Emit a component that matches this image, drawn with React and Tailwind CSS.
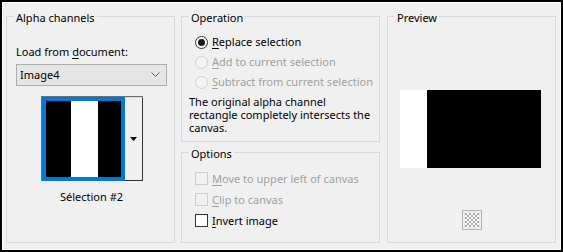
import React from 'react';

const Mn = ({ children }) => <span className="underline underline-offset-[2px]">{children}</span>;

const Group = ({ title, className, children }) => (
  <fieldset className={`min-w-0 border border-[#d9d9d9] ${className}`}>
    <legend className="ml-[7px] px-[2px] pt-[4px] leading-[16px] text-black">{title}</legend>
    {children}
  </fieldset>
);

const Radio = ({ checked, disabled, mn, rest }) => (
  <div className="flex h-[20px] items-center whitespace-nowrap">
    <span
      className={`flex h-[13px] w-[13px] items-center justify-center rounded-full border ${
        disabled ? 'border-[#cfcfcf] bg-[#f4f4f4]' : 'border-[#333333] bg-white'
      }`}
    >
      {checked && <span className="h-[7px] w-[7px] rounded-full bg-[#1a1a1a]" />}
    </span>
    <span className={`ml-[4px] leading-[16px] ${disabled ? 'text-[#a0a0a0]' : 'text-black'}`}>
      <Mn>{mn}</Mn>
      {rest}
    </span>
  </div>
);

const Check = ({ disabled, mn, rest }) => (
  <div className="flex h-[21px] items-center whitespace-nowrap">
    <span
      className={`h-[13px] w-[13px] border ${
        disabled ? 'border-[#cccccc] bg-[#f0f0f0]' : 'border-[#333333] bg-white'
      }`}
    />
    <span className={`ml-[4px] leading-[16px] ${disabled ? 'text-[#a0a0a0]' : 'text-black'}`}>
      <Mn>{mn}</Mn>
      {rest}
    </span>
  </div>
);

export default function App() {
  return (
    <div className="h-[252px] w-[563px] border-2 border-black bg-[#f0f0f0] font-['Noto_Sans',sans-serif] text-[11px] text-black">
      <div className="flex h-full w-full border border-white pl-[3px] pt-[3px]">
        {/* Alpha channels */}
        <Group title="Alpha channels" className="h-[237px] w-[169px] shrink-0">
          <div className="flex flex-col pl-[9px] pr-[7px]">
            <div className="mt-[18px] leading-[16px]">
              Load from <Mn>d</Mn>ocument:
            </div>
            <div className="mt-[4px] flex h-[22px] w-full items-center justify-between border border-[#adadad] bg-[#e5e5e5] pl-[3px] pr-[6px]">
              <span className="leading-[14px]">Image4</span>
              <svg width="9" height="6" viewBox="0 0 9 6">
                <path d="M0.5 0.5 L4.5 4.5 L8.5 0.5" fill="none" stroke="#606060" strokeWidth="1" />
              </svg>
            </div>
            <div className="mt-[10px] flex self-center">
              <div className="flex h-[85px] border-l border-t border-[#6e6e6e]">
                <div className="flex h-[84px] w-[83px] border-4 border-[#0078d7]">
                  <div className="h-full w-[25px] bg-black" />
                  <div className="h-full w-[27px] bg-white" />
                  <div className="h-full flex-1 bg-black" />
                </div>
                <div className="flex h-[84px] w-[18px] items-center justify-center border-b border-r border-t border-b-[#333333] border-r-[#333333] border-t-[#dcdcdc] bg-[#f0f0f0]">
                  <svg width="7" height="4" viewBox="0 0 7 4">
                    <path d="M0 0 H7 L3.5 4 Z" fill="#000" />
                  </svg>
                </div>
              </div>
            </div>
            <div className="mt-[8px] self-center leading-[16px]">Sélection #2</div>
          </div>
        </Group>

        {/* Operation + Options */}
        <div className="ml-[6px] flex w-[199px] shrink-0 flex-col">
          <Group title="Operation" className="h-[136px] w-full">
            <div className="flex flex-col pl-[13px] pt-[6px]">
              <Radio checked mn="R" rest="eplace selection" />
              <Radio disabled mn="A" rest="dd to current selection" />
              <Radio disabled mn="S" rest="ubtract from current selection" />
            </div>
            <p className="mt-[3px] pl-[7px] leading-[13px]">
              The original alpha channel
              <br />
              rectangle completely intersects the
              <br />
              canvas.
            </p>
          </Group>
          <Group title="Options" className="h-[101px] w-full">
            <div className="flex flex-col pl-[13px] pt-[6px]">
              <Check disabled mn="M" rest="ove to upper left of canvas" />
              <Check disabled mn="C" rest="lip to canvas" />
              <Check mn="I" rest="nvert image" />
            </div>
          </Group>
        </div>

        {/* Preview */}
        <Group title="Preview" className="ml-[7px] h-[237px] w-[169px] shrink-0">
          <div className="flex flex-col items-center">
            <div className="ml-[12px] mt-[64px] flex h-[78px] w-[141px] self-start">
              <div className="h-full w-[27px] bg-white" />
              <div className="h-full flex-1 bg-black" />
            </div>
            <div className="mt-[42px] flex h-[20px] w-[20px] items-center justify-center border border-[#b5b5b5] bg-[#ececec]">
              <svg width="14" height="14" viewBox="0 0 14 14" shapeRendering="crispEdges">
                <rect width="14" height="14" fill="#ffffff" />
                {[0, 1, 2, 3, 4, 5, 6].map((r) =>
                  [0, 1, 2, 3, 4, 5, 6].map((c) =>
                    (r + c) % 2 === 0 ? (
                      <rect key={`${r}-${c}`} x={c * 2} y={r * 2} width="2" height="2" fill="#a8a8a8" />
                    ) : null
                  )
                )}
              </svg>
            </div>
          </div>
        </Group>
      </div>
    </div>
  );
}
